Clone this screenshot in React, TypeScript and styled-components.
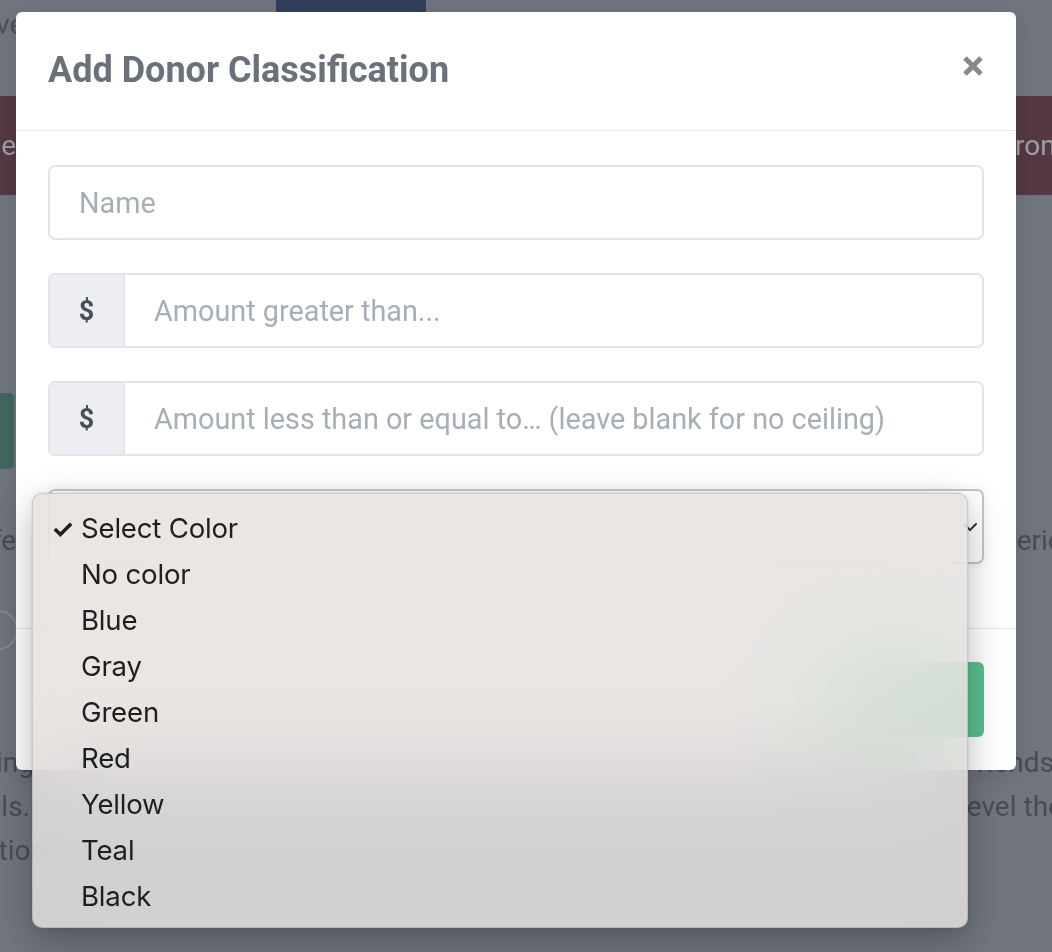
import React from "react";
import styled, { createGlobalStyle } from "styled-components";

const GlobalStyle = createGlobalStyle`
  html, body {
    margin: 0;
    padding: 0;
    background: #71757e;
  }

  * {
    box-sizing: border-box;
  }
`;

const Page = styled.div`
  position: relative;

  width: 1052px;
  height: 952px;

  overflow: hidden;

  background: #71757e;
  font-family: Roboto, "Liberation Sans", sans-serif;
`;

/* dimmed page behind the modal */

const TopStrip = styled.div`
  height: 96px;

  display: flex;
  align-items: flex-start;
`;

const TopWord = styled.span`
  margin-top: 8px;
  margin-left: -4px;

  font-size: 28px;
  color: #4a4f59;
`;

const NavTab = styled.div`
  margin-left: 252px;

  width: 150px;
  height: 40px;

  background: #333f5e;
`;

const RedBand = styled.div`
  height: 99px;

  display: flex;
  align-items: center;

  background: #553842;
`;

const BackContent = styled.div`
  padding-top: 198px;
`;

const BackRow = styled.div<{ $gap: number }>`
  margin-top: ${({ $gap }) => $gap}px;

  height: 44px;

  display: flex;
  align-items: center;
`;

/* a word cut by the modal: the left one shows its end, the right one its start */
const LeftCut = styled.div<{ $width: number; $dim?: boolean }>`
  flex-shrink: 0;

  width: ${({ $width }) => $width}px;

  display: flex;
  justify-content: flex-end;

  overflow: hidden;

  font-size: 28px;
  color: ${({ $dim }) => ($dim ? "#9d9ea6" : "#474c56")};

  span {
    flex-shrink: 0;
    white-space: nowrap;
  }
`;

const RightCut = styled.div<{ $from: number; $leftWidth: number; $dim?: boolean }>`
  flex-shrink: 0;

  margin-left: ${({ $from, $leftWidth }) => $from - $leftWidth}px;

  white-space: nowrap;

  font-size: 28px;
  color: ${({ $dim }) => ($dim ? "#9d9ea6" : "#474c56")};
`;

const GhostButton = styled.div`
  margin-left: -20px;

  width: 34px;
  height: 76px;

  border-radius: 5px;
  background: #3f6a5e;
`;

const GhostRadio = styled.div`
  margin-top: 48px;
  margin-left: -22px;

  width: 40px;
  height: 40px;

  border: 2px solid #868a92;
  border-radius: 50%;
`;

/* modal */

const Modal = styled.div`
  position: absolute;
  top: 12px;
  left: 16px;

  width: 1000px;

  background: #fff;
  border-radius: 6px;
  box-shadow: 0 4px 24px rgba(0, 0, 0, 0.12);
`;

const ModalHeader = styled.div`
  height: 119px;

  padding: 0 32px;

  display: flex;
  align-items: center;
  justify-content: space-between;

  border-bottom: 1px solid #e3e6ea;
`;

const Title = styled.h2`
  margin: 0 0 2px;

  font-size: 36px;
  font-weight: 700;
  color: #6b717b;
`;

const CloseButton = styled.button`
  margin-top: -10px;

  padding: 0;

  background: transparent;
  border: none;

  display: flex;
`;

const ModalBody = styled.div`
  padding: 34px 32px 64px;

  display: flex;
  flex-direction: column;
  gap: 33px;
`;

const Field = styled.div<{ $focused?: boolean }>`
  height: 75px;

  display: flex;

  border: 2px solid ${({ $focused }) => ($focused ? "#c2c6cc" : "#e1e4e8")};
  border-radius: 7px;
  overflow: hidden;

  box-shadow: ${({ $focused }) =>
    $focused ? "0 0 10px rgba(0, 0, 0, 0.06)" : "none"};
`;

const Addon = styled.div`
  width: 75px;

  display: flex;
  align-items: center;
  justify-content: center;

  background: #eceef1;
  border-right: 2px solid #e1e4e8;

  font-size: 27px;
  font-weight: 700;
  color: #4a4f57;
`;

const TextInput = styled.input`
  flex: 1;

  padding: 0 29px;

  border: none;
  outline: none;
  background: transparent;

  font-family: Roboto, "Liberation Sans", sans-serif;
  font-size: 28.8px;
  color: #333;

  &::placeholder {
    color: #a8aeb6;
  }
`;

const SelectFace = styled.div`
  flex: 1;

  padding: 0 4px 0 29px;

  display: flex;
  align-items: center;
  justify-content: flex-end;
`;

const ModalFooter = styled.div`
  padding: 33px 32px;

  display: flex;
  justify-content: flex-end;

  border-top: 1px solid #e3e6ea;
`;

const SaveButton = styled.button`
  width: 160px;
  height: 75px;

  border: none;
  border-radius: 6px;
  background: #5ac08f;
`;

/* native select popup */

const Popup = styled.ul`
  position: absolute;
  top: 493px;
  left: 32px;

  width: 936px;
  height: 435px;

  margin: 0;
  padding: 11px 0 0;

  list-style: none;

  background: rgba(229, 225, 223, 0.84);
  backdrop-filter: blur(50px) saturate(1.4);
  -webkit-backdrop-filter: blur(50px) saturate(1.4);

  border: 1px solid rgba(0, 0, 0, 0.12);
  border-radius: 10px;
  box-shadow: 0 12px 36px rgba(0, 0, 0, 0.28), 0 0 2px rgba(0, 0, 0, 0.2);
`;

const Option = styled.li`
  position: relative;

  height: 46px;

  padding-left: 48px;

  display: flex;
  align-items: center;

  font-family: Inter, "Liberation Sans", sans-serif;
  font-size: 27.6px;
  color: #1f1f1f;
  letter-spacing: -0.2px;
`;

const Check = styled.span`
  position: absolute;
  left: 18px;

  font-size: 26px;
  font-weight: 700;
`;

const colors = [
  "Select Color",
  "No color",
  "Blue",
  "Gray",
  "Green",
  "Red",
  "Yellow",
  "Teal",
  "Black",
];

export default function App() {
  return (
    <Page>
      <GlobalStyle />

      <TopStrip>
        <TopWord>ve</TopWord>
        <NavTab />
      </TopStrip>
      <RedBand>
        <LeftCut $width={16} $dim>
          <span>Profile</span>
        </LeftCut>
        <RightCut $from={1000} $leftWidth={16} $dim>
          Frontend
        </RightCut>
      </RedBand>
      <BackContent>
        <GhostButton />
        <BackRow $gap={49}>
          <LeftCut $width={16}>
            <span>Safe</span>
          </LeftCut>
          <RightCut $from={1001} $leftWidth={16}>
            period
          </RightCut>
        </BackRow>
        <GhostRadio />
        <BackRow $gap={90}>
          <LeftCut $width={34}>
            <span>Giving</span>
          </LeftCut>
          <RightCut $from={962} $leftWidth={34}>
            Friends
          </RightCut>
        </BackRow>
        <BackRow $gap={0}>
          <LeftCut $width={30}>
            <span>levels.</span>
          </LeftCut>
          <RightCut $from={960} $leftWidth={30}>
            level the
          </RightCut>
        </BackRow>
        <BackRow $gap={0}>
          <LeftCut $width={46}>
            <span>Classification</span>
          </LeftCut>
        </BackRow>
      </BackContent>

      <Modal>
        <ModalHeader>
          <Title>Add Donor Classification</Title>
          <CloseButton aria-label="Close">
            <svg width="22" height="22" viewBox="0 0 22 22">
              <path
                d="M3 3 L19 19 M19 3 L3 19"
                stroke="#888888"
                strokeWidth="5"
                strokeLinecap="butt"
              />
            </svg>
          </CloseButton>
        </ModalHeader>

        <ModalBody>
          <Field>
            <TextInput placeholder="Name" />
          </Field>
          <Field>
            <Addon>$</Addon>
            <TextInput placeholder="Amount greater than..." />
          </Field>
          <Field>
            <Addon>$</Addon>
            <TextInput placeholder="Amount less than or equal to… (leave blank for no ceiling)" />
          </Field>
          <Field $focused>
            <SelectFace>
              <svg width="16" height="16" viewBox="0 0 16 16">
                <path
                  d="M2 5 L8 11 L14 5"
                  fill="none"
                  stroke="#343a40"
                  strokeWidth="2"
                  strokeLinecap="round"
                />
              </svg>
            </SelectFace>
          </Field>
        </ModalBody>

        <ModalFooter>
          <SaveButton aria-label="Save" />
        </ModalFooter>
      </Modal>

      <Popup>
        {colors.map((c, i) => (
          <Option key={c}>
            {i === 0 && <Check>✓</Check>}
            {c}
          </Option>
        ))}
      </Popup>
    </Page>
  );
}
